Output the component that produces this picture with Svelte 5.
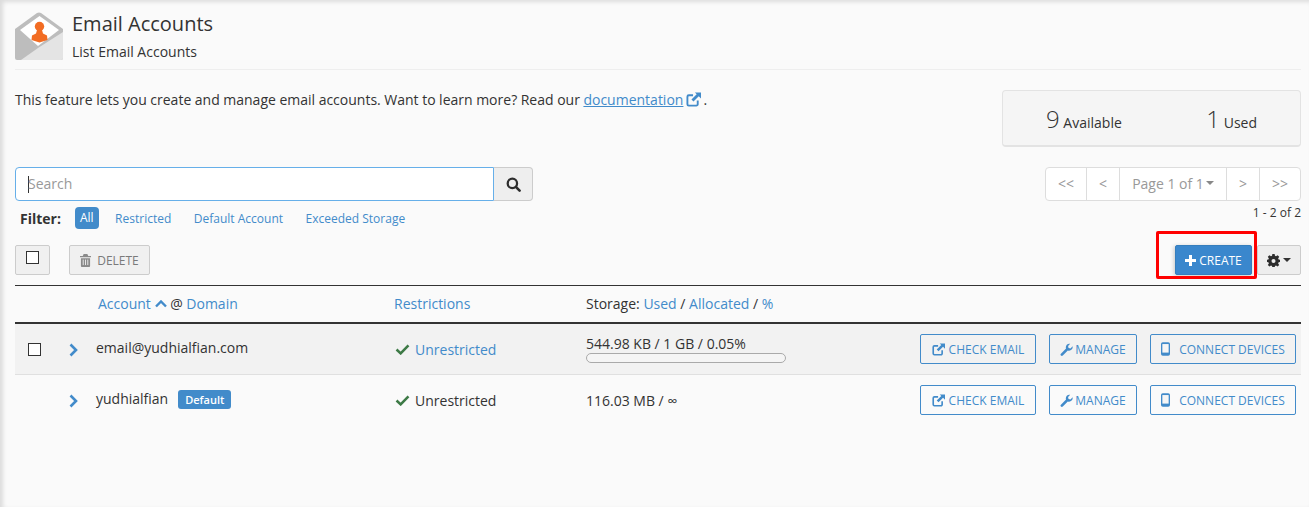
<script>
	const accounts = [
		{ name: 'email@yudhialfian.com', check: true, link: true, usage: '544.98 KB / 1 GB / 0.05%', bar: true },
		{ name: 'yudhialfian', check: false, link: false, usage: '116.03 MB / ∞', bar: false, isDefault: true }
	];
	const filters = ['All', 'Restricted', 'Default Account', 'Exceeded Storage'];
</script>

{#snippet extLink()}
	<svg class="ic" viewBox="0 0 16 16" width="13" height="13">
		<path d="M12.500 9v4a1.500 1.500 0 0 1-1.500 1.500H3A1.500 1.500 0 0 1 1.500 13V5A1.500 1.500 0 0 1 3 3.500h4.500" fill="none" stroke="currentColor" stroke-width="2"/>
		<path d="M9.500 0.500H16V7l-2.400-2.400-5.600 5.600-2.200-2.200 5.600-5.600z" fill="currentColor"/>
	</svg>
{/snippet}

<div class="shadow-top"></div>
<div class="page">
	<header class="head">
		<svg class="logo" viewBox="0 0 48 48" width="48" height="48">
			<path d="M0 17 22 1a4 4 0 0 1 4 0l22 16v29a2 2 0 0 1-2 2H2a2 2 0 0 1-2-2z" fill="#bdbdbd"/>
			<path d="M48 20v26a2 2 0 0 1-2 2H6l17-12z" fill="#e4e4e4"/>
			<path d="M5 18 24.500 4 44 18 23 34z" fill="#fff"/>
			<circle cx="24.500" cy="14.500" r="4.700" fill="#f26c23"/>
			<path d="M22 18h5l1 3.500 4 2 .5 4.500-8 2.500-8-2.500.5-4.500 4-2z" fill="#f26c23"/>
		</svg>
		<div class="titles">
			<h1>Email Accounts</h1>
			<p>List Email Accounts</p>
		</div>
	</header>

	<div class="intro">
		<p>This feature lets you create and manage email accounts. Want to learn more? Read our <a href="#top" class="doc">documentation</a><span class="doc-ic">{@render extLink()}</span>.</p>
		<div class="stats">
			<div class="stat"><b>9</b> Available</div>
			<div class="stat"><b>1</b> Used</div>
		</div>
	</div>

	<div class="search-row">
		<div class="left">
			<div class="search">
				<div class="input"><i class="caret"></i>Search</div>
				<div class="go">
					<svg viewBox="0 0 16 16" width="15" height="15"><circle cx="6.800" cy="6.800" r="5" fill="none" stroke="#2d2d2d" stroke-width="2.400"/><path d="m10.500 10.500 4 4" stroke="#2d2d2d" stroke-width="2.800" stroke-linecap="round"/></svg>
				</div>
			</div>
			<div class="filters">
				<strong>Filter:</strong>
				{#each filters as f, i}
					<span class="filter" class:on={i === 0}>{f}</span>
				{/each}
			</div>
		</div>
		<div class="right">
			<div class="pager">
				<span class="wide">&lt;&lt;</span><span>&lt;</span><span class="page-no">Page 1 of 1<i class="tri"></i></span><span>&gt;</span><span class="wide">&gt;&gt;</span>
			</div>
			<div class="count">1 - 2 of 2</div>
		</div>
	</div>

	<div class="actions">
		<div class="box-btn"><i class="check"></i></div>
		<div class="del">
			<svg viewBox="0 0 12 14" width="11" height="13"><path d="M4 0h4l1 2h3v1.500H0V2h3zM1 4.500h10V13a1 1 0 0 1-1 1H2a1 1 0 0 1-1-1z" fill="#8a8a8a"/><path d="M3.500 6v6M6 6v6M8.500 6v6" stroke="#f0f0f0"/></svg>
			DELETE
		</div>
		<div class="spacer"></div>
		<div class="create">
			<svg viewBox="0 0 11 11" width="11" height="11"><path d="M4 0h3v4h4v3H7v4H4V7H0V4h4z" fill="#fff"/></svg>
			CREATE
		</div>
		<div class="gear">
			<svg viewBox="0 0 16 16" width="13" height="13"><path d="M6.600 0h2.800l.4 2.200 1.300.6 1.900-1.300 2 2-1.300 1.900.6 1.300 2.200.4v2.800l-2.200.4-.6 1.300 1.300 1.900-2 2-1.900-1.300-1.300.6-.4 2.200H6.600l-.4-2.200-1.300-.6L3 15.500l-2-2 1.300-1.900-.6-1.300L-.500 9.900V7.100l2.200-.4.600-1.300L1 3.500l2-2 1.900 1.300 1.300-.6z" fill="#2d2d2d"/><circle cx="8" cy="8.500" r="2.500" fill="#eee"/></svg>
			<i class="tri dark"></i>
		</div>
	</div>

	<div class="thead">
		<div class="c-check"></div>
		<div class="c-acct th"><span class="lk">Account</span>
			<svg viewBox="0 0 12 8" width="12" height="8"><path d="M1 6.500 6 1.500l5 5" fill="none" stroke="#428bca" stroke-width="2.400"/></svg>
			@ <span class="lk">Domain</span></div>
		<div class="c-rest th"><span class="lk">Restrictions</span></div>
		<div class="c-store th">Storage: <span class="lk">Used</span> / <span class="lk">Allocated</span> / <span class="lk">%</span></div>
	</div>

	{#each accounts as a}
		<div class="row" class:shaded={a.check}>
			<div class="c-check">{#if a.check}<i class="check"></i>{/if}</div>
			<div class="c-acct acct">
				<svg class="chev" viewBox="0 0 9 14" width="9" height="14"><path d="M1.500 1.500 7 7l-5.500 5.500" fill="none" stroke="#428bca" stroke-width="2.600"/></svg>
				<span class="name">{a.name}</span>
				{#if a.isDefault}<span class="badge">Default</span>{/if}
			</div>
			<div class="c-rest rest" class:lk={a.link}>
				<svg viewBox="0 0 16 12" width="15" height="11"><path d="M1.500 6 6 10.200 14.500 1.500" fill="none" stroke="#3d7a46" stroke-width="2.800"/></svg>
				Unrestricted
			</div>
			<div class="c-store">
				<div class="usage">{a.usage}</div>
				{#if a.bar}<div class="bar"></div>{/if}
			</div>
			<div class="btns">
				<div class="btn b1">{@render extLink()} CHECK EMAIL</div>
				<div class="btn b2">
					<svg viewBox="0 0 14 14" width="13" height="13"><path d="M1 11.500 6.500 6C5.500 3 7.800.2 11 .8L8.700 3.200l.5 2.100 2.100.5 2.300-2.300c.6 3.200-2.200 5.500-5.200 4.500L3 13.500a1.400 1.400 0 0 1-2-2z" fill="currentColor"/></svg>
					MANAGE
				</div>
				<div class="btn b3">
					<svg viewBox="0 0 10 15" width="9" height="14"><rect x="0" y="0" width="10" height="15" rx="2" fill="currentColor"/><rect x="1.500" y="2" width="7" height="9.500" fill="#f6f6f6"/></svg>
					<span class="gap">CONNECT DEVICES</span>
				</div>
			</div>
		</div>
	{/each}
</div>

<style>
	:global(body) {
		margin: 0;
		background: #fafafa;
		font-family: 'Open Sans', 'Liberation Sans', sans-serif;
		font-size: 14px;
		color: #333;
		overflow: hidden;
	}

	.shadow-top {
		position: fixed;
		inset: 0;
		pointer-events: none;
		box-shadow: inset 3px 2px 4px rgba(0, 0, 0, 0.12);
		z-index: 3;
	}

	.page {
		height: 507px;
		box-sizing: border-box;
		padding: 12px 8px 0 15px;
	}

	/* header */
	.head {
		display: flex;
		gap: 9px;
		height: 57px;
		border-bottom: 1px solid #eee;
	}

	.logo {
		flex-shrink: 0;
	}

	h1 {
		margin: 0;
		font-size: 20px;
		font-weight: 400;
		line-height: 24px;
	}

	.titles p {
		margin: 6px 0 0;
		line-height: 20px;
	}

	/* intro + stats */
	.intro {
		display: flex;
		justify-content: space-between;
		align-items: flex-start;
		height: 97px;
		padding-top: 20px;
		box-sizing: border-box;
	}

	.intro p {
		margin: 0;
		line-height: 20px;
		word-spacing: -0.08px;
	}

	.doc {
		color: #428bca;
		text-decoration: underline;
	}

	.doc-ic {
		color: #428bca;
		margin: 0 2px 0 3px;
	}

	.doc-ic .ic {
		width: 15px;
		height: 15px;
		vertical-align: -2px;
	}

	.stats {
		display: flex;
		justify-content: space-between;
		box-sizing: border-box;
		width: 299px;
		height: 57px;
		padding: 0 43px;
		align-items: center;
		background: #f5f5f5;
		border: 1px solid #e3e3e3;
		border-bottom-width: 2px;
		border-radius: 4px;
	}

	.stat b {
		font-size: 24px;
		font-weight: 300;
	}

	/* search row */
	.search-row {
		display: flex;
		justify-content: space-between;
		height: 78px;
	}

	.search {
		display: flex;
		width: 518px;
		height: 34px;
	}

	.input {
		flex: 1;
		display: flex;
		align-items: center;
		padding: 0 0 2px 12px;
		background: #fff;
		color: #999;
		border: 1px solid #66afe9;
		border-radius: 4px 0 0 4px;
	}

	.caret {
		width: 1px;
		height: 17px;
		background: #333;
		margin: 2px -1px 0 0;
	}

	.go {
		width: 38px;
		display: flex;
		align-items: center;
		justify-content: center;
		background: #eee;
		border: 1px solid #ccc;
		border-left: 0;
		border-radius: 0 4px 4px 0;
	}

	.filters {
		display: flex;
		align-items: center;
		margin: 6px 0 0 5px;
		font-size: 12px;
		color: #428bca;
		height: 22px;
	}

	.filters strong {
		font-size: 14px;
		color: #333;
		margin-right: 14px;
	}

	.filter {
		margin-right: 22.5px;
	}

	.filter.on {
		background: #428bca;
		color: #fff;
		border-radius: 4px;
		padding: 0 5px;
		line-height: 22px;
		margin-right: 16.5px;
	}

	.right {
		display: flex;
		flex-direction: column;
		align-items: flex-end;
	}

	.pager {
		display: flex;
		height: 34px;
		background: #fff;
		color: #999;
		border: 1px solid #ddd;
		border-radius: 4px;
		box-sizing: border-box;
	}

	.pager span {
		display: flex;
		align-items: center;
		justify-content: center;
		width: 32px;
		padding-bottom: 2px;
		box-sizing: content-box;
		border-left: 1px solid #ddd;
	}

	.pager span:first-child {
		border-left: 0;
	}

	.pager .wide {
		width: 40px;
	}

	.pager .page-no {
		width: 106px;
	}

	.tri {
		display: inline-block;
		margin-left: 2px;
		border-top: 4px solid #888;
		border-left: 4px solid transparent;
		border-right: 4px solid transparent;
	}

	.tri.dark {
		border-top-color: #333;
	}

	.count {
		font-size: 12px;
		line-height: 16px;
		margin-top: 4px;
	}

	/* action bar */
	.actions {
		display: flex;
		align-items: center;
		height: 30px;
		border-bottom: 1px solid #333;
		padding-bottom: 10px;
	}

	.box-btn {
		box-sizing: border-box;
		width: 35px;
		height: 30px;
		display: flex;
		justify-content: center;
		padding-top: 5px;
		background: #f0f0f0;
		border: 1px solid #ccc;
		border-radius: 2px;
		margin-right: 19px;
	}

	.check {
		display: block;
		box-sizing: border-box;
		width: 13px;
		height: 13px;
		background: #fff;
		border: 1px solid #333;
	}

	.del {
		box-sizing: border-box;
		height: 30px;
		width: 81px;
		display: flex;
		align-items: center;
		justify-content: center;
		gap: 6px;
		font-size: 12px;
		color: #7a7a7a;
		background: #f0f0f0;
		border: 1px solid #ccc;
		border-radius: 2px;
	}

	.spacer {
		flex: 1;
	}

	.create {
		position: relative;
		box-sizing: border-box;
		width: 77px;
		height: 30px;
		margin-right: 5px;
		display: flex;
		align-items: center;
		justify-content: center;
		gap: 3px;
		font-size: 12px;
		color: #fff;
		background: #3a87cd;
		border: 1px solid #357ebd;
		border-radius: 2px;
		box-shadow: -1px 1px 4px rgba(0, 0, 0, 0.2);
	}

	/* red annotation drawn over the screenshot */
	.create::after {
		content: '';
		position: absolute;
		left: -20px;
		top: -15px;
		width: 101px;
		height: 48px;
		box-sizing: border-box;
		border: 3px solid #f00;
		border-radius: 2px;
	}

	.gear {
		box-sizing: border-box;
		width: 44px;
		height: 30px;
		display: flex;
		align-items: center;
		justify-content: center;
		gap: 1px;
		background: #eee;
		border: 1px solid #ccc;
		border-radius: 2px;
	}

	/* table */
	.thead,
	.row {
		display: flex;
		align-items: center;
	}

	.thead {
		box-sizing: content-box;
		height: 35px;
		padding-bottom: 1px;
		border-bottom: 2px solid #333;
		font-size: 14px;
	}

	.row {
		height: 50px;
		border-bottom: 1px solid #e0e0e0;
	}

	.row:last-child {
		border-bottom: 0;
	}

	.row.shaded {
		background: #f2f2f2;
	}

	.lk {
		color: #428bca;
	}

	.c-check {
		width: 45px;
		padding-left: 13px;
		box-sizing: border-box;
		flex-shrink: 0;
	}

	.c-acct {
		width: 334px;
		flex-shrink: 0;
		padding-left: 38px;
		box-sizing: border-box;
	}

	.acct {
		display: flex;
		align-items: center;
		padding-left: 9px;
		margin-top: -3px;
	}

	.th {
		white-space: nowrap;
	}

	.th svg {
		vertical-align: 1px;
	}

	.chev {
		margin-right: 18px;
		margin-top: 5px;
	}

	.badge {
		margin: 2px 0 0 10px;
		background: #428bca;
		color: #fff;
		font-size: 11px;
		font-weight: 600;
		line-height: 19px;
		padding: 0 7px;
		border-radius: 3px;
	}

	.c-rest {
		width: 192px;
		flex-shrink: 0;
	}

	.rest {
		display: flex;
		align-items: center;
		gap: 5px;
		padding-left: 1px;
		box-sizing: border-box;
	}

	.c-store {
		flex: 1;
		white-space: nowrap;
	}

	.usage {
		line-height: 18px;
		padding-top: 1px;
	}

	.bar {
		box-sizing: border-box;
		width: 200px;
		height: 10px;
		margin-bottom: 2px;
		background: #f5f5f5;
		border: 1px solid #aaa;
		border-radius: 5px;
	}

	.btns {
		display: flex;
		gap: 13px;
		padding-right: 5px;
	}

	.btn {
		box-sizing: border-box;
		height: 30px;
		display: flex;
		align-items: center;
		justify-content: center;
		gap: 4px;
		font-size: 12px;
		color: #428bca;
		border: 1px solid #428bca;
		border-radius: 2px;
	}

	.b1 {
		width: 116px;
	}

	.b2 {
		width: 88px;
		gap: 2px;
	}

	.b3 {
		width: 146px;
		gap: 7px;
	}

	.gap {
		margin-left: 2px;
	}
</style>
